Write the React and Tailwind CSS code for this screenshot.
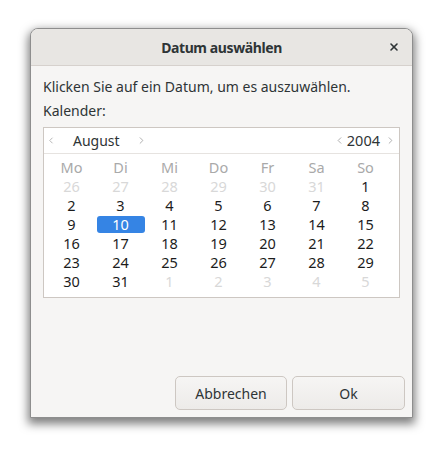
import { X, ChevronLeft, ChevronRight } from 'lucide-react';

const weekdays = ['Mo', 'Di', 'Mi', 'Do', 'Fr', 'Sa', 'So'];

function buildDays() {
  const days = [];
  for (let d = 26; d <= 31; d++) days.push({ n: d, muted: true });
  for (let d = 1; d <= 31; d++) days.push({ n: d, muted: false });
  for (let d = 1; d <= 5; d++) days.push({ n: d, muted: true });
  return days;
}

function Chevron({ dir }) {
  const Icon = dir === 'left' ? ChevronLeft : ChevronRight;
  return <Icon className="w-[11px] h-[11px] text-[#a8a8a8]" strokeWidth={2} />;
}

function Calendar() {
  const days = buildDays();
  return (
    <div className="bg-white border border-[#cdc7c2] mt-[6px]">
      <div className="h-[26px] flex items-center border-b border-[#e6e3e0] text-[14px] text-[#2e3436]">
        <div className="w-[10px] ml-[2px] flex justify-center"><Chevron dir="left" /></div>
        <span className="ml-[17px]">August</span>
        <div className="ml-[16px] flex"><Chevron dir="right" /></div>
        <div className="flex-1" />
        <Chevron dir="left" />
        <span className="ml-[2px] text-[14.5px]">2004</span>
        <div className="ml-[5px] mr-[3px] flex"><Chevron dir="right" /></div>
      </div>
      <div className="grid grid-cols-[repeat(7,49px)] pl-[3px] pt-[4px] pb-[6px] text-[14.5px]">
        {weekdays.map(w => (
          <div key={w} className="h-[19px] flex items-center justify-center text-[#a9a9a9]">{w}</div>
        ))}
        {days.map((d, i) => (
          <div key={i} className="h-[19px] flex items-center justify-center">
            {d.n === 10 && !d.muted ? (
              <span className="w-[48px] h-[17px] rounded-[3px] bg-[#3584e4] text-white flex items-center justify-center">10</span>
            ) : (
              <span className={d.muted ? 'text-[#d8d8d8]' : 'text-[#1c1c1c]'}>{d.n}</span>
            )}
          </div>
        ))}
      </div>
    </div>
  );
}

export default function App() {
  return (
    <div className="w-[447px] h-[456px] bg-white pt-[28px] pl-[30px]" style={{ fontFamily: '"Noto Sans", "DejaVu Sans", sans-serif' }}>
      <div className="w-[383px] h-[390px] flex flex-col bg-[#f6f5f4] border border-[#8e8e8e] rounded-t-[8px] shadow-[0_4px_10px_2px_rgba(0,0,0,0.5)] overflow-hidden">
        <div className="h-[37px] shrink-0 relative flex items-center justify-center bg-[#e8e6e3] border-b border-[#d6d1cd]">
          <span className="text-[14px] font-bold tracking-[-0.4px] text-[#2e3436]">Datum auswählen</span>
          <X className="absolute right-[12px] top-[12px] w-[12px] h-[12px] text-[#2e3436]" strokeWidth={3.2} />
        </div>
        <div className="flex-1 flex flex-col px-[12px] pt-[11px] text-[#2e3436] text-[14px]">
          <div className="h-[20px] leading-[20px]">Klicken Sie auf ein Datum, um es auszuwählen.</div>
          <div className="h-[20px] leading-[20px] mt-[4px]">Kalender:</div>
          <Calendar />
          <div className="flex-1" />
        </div>
        <div className="flex justify-end gap-[5px] pr-[7px] pb-[7px]">
          <button className="w-[112px] h-[34px] rounded-[5px] border border-[#cdc7c2] bg-gradient-to-b from-[#f6f5f4] to-[#edebe9] text-[14px] text-[#2e3436]">Abbrechen</button>
          <button className="w-[113px] h-[34px] rounded-[5px] border border-[#cdc7c2] bg-gradient-to-b from-[#f6f5f4] to-[#edebe9] text-[14px] text-[#2e3436]">Ok</button>
        </div>
      </div>
    </div>
  );
}
